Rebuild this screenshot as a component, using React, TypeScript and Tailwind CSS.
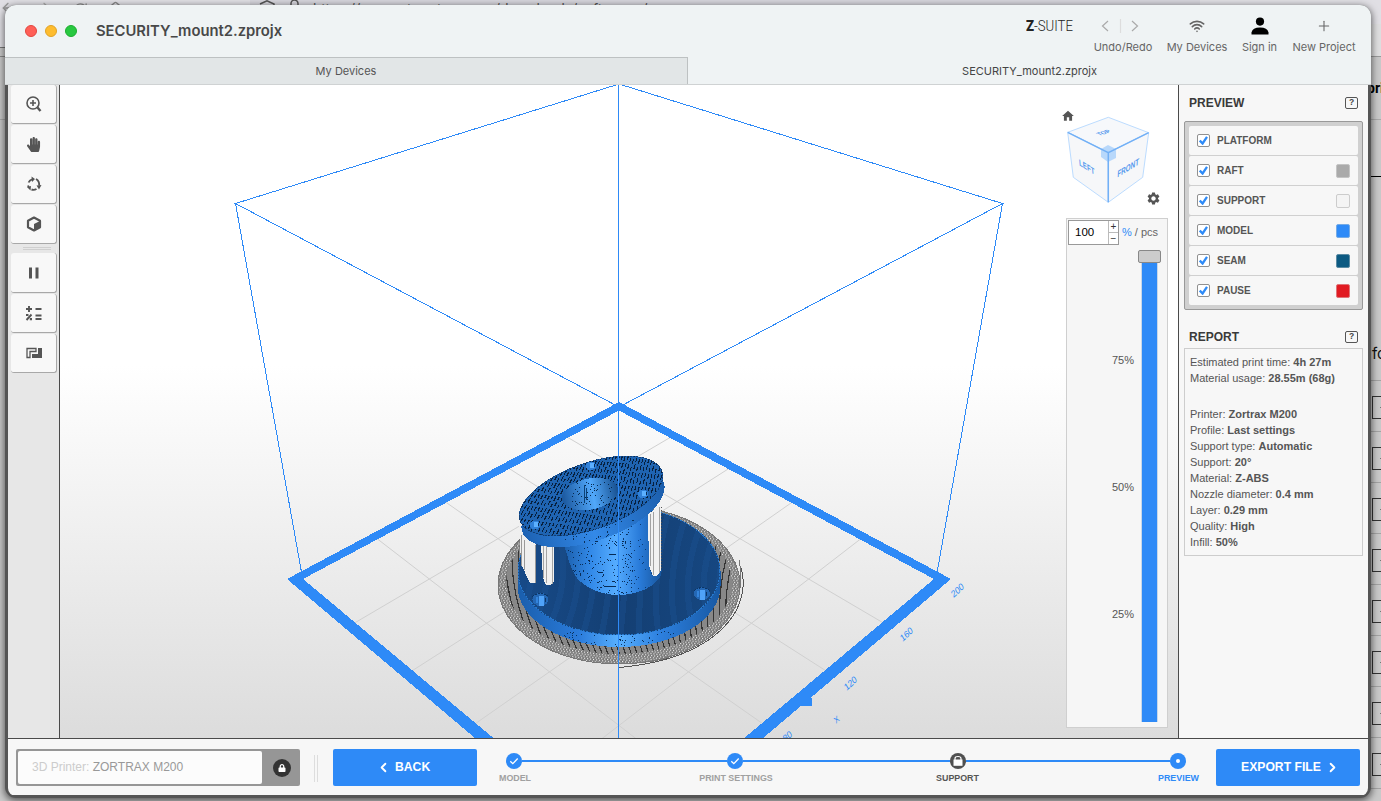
import React from "react";
import { Wifi, Plus, ChevronLeft, ChevronRight, ArrowLeft, ArrowRight, RotateCw, Home } from "lucide-react";
import { FaHandPaper, FaLock } from "react-icons/fa";
import { MdHome, MdSettings } from "react-icons/md";

const BLUE = "#2e8af7";

/* ---------- deterministic noise ---------- */
function makeRandom(seed: number) {
  let s = seed;
  return () => {
    s = (s * 16807) % 2147483647;
    return s / 2147483647;
  };
}

function speckles(seed: number, count: number, cx: number, cy: number, rx: number, ry: number) {
  const r = makeRandom(seed);
  let d = "";
  for (let i = 0; i < count; i++) {
    const x = Math.round(cx + (r() * 2 - 1) * rx);
    const y = Math.round(cy + (r() * 2 - 1) * ry);
    d += `M${x} ${y}h1v1h-1z`;
  }
  return d;
}

/* ---------- platform floor in perspective ---------- */
function floorPoint(u: number, v: number): string {
  const w = 1 - 0.1845 * (u + v);
  const x = 619 + (257.7 * (u - v)) / w;
  const y = (407 + 65.2 * (u + v)) / w;
  return `${x.toFixed(1)} ${y.toFixed(1)}`;
}

const floorGrid = [0.2, 0.4, 0.6, 0.8]
  .map((t) => `M${floorPoint(t, 0)}L${floorPoint(t, 1)}M${floorPoint(0, t)}L${floorPoint(1, t)}`)
  .join("");

/* filament lines on the flange: steep on the right, leaning on the left */
const topHatch = Array.from({ length: 46 }, (_, i) => {
  const x = 500 + i * 4;
  const lean = Math.max(8, 52 - i * 1.1);
  return {
    d: `M${x + lean} 450Q${x + lean * 0.45} 490 ${x - 8} 545`,
    offset: (i * 5.3) % 11,
  };
});

const raftHatch = Array.from({ length: 44 }, (_, i) => {
  const x = 470 + i * 6.4;
  const k = (x - 619) / 130;
  return `M${x + 10 + k * 12} 520Q${x - 14} 600 ${x + 22 - k * 16} 672`;
}).join("");

const baseBands = Array.from({ length: 15 }, (_, i) => {
  const x = 500 + i * 17;
  const bend = (619 - x) * 0.5;
  return `M${x - bend * 0.3 + 12} 505Q${x + bend * 0.7 + 6} 590 ${x - bend * 0.5} 650`;
}).join("");

function Model() {
  return (
    <g shapeRendering="crispEdges">
      {/* raft */}
      <path d="M741 568Q748 592 733 616Q702 660 619 667.500" fill="none" stroke="#555" strokeWidth="1" />
      <path d="M739 560Q746 590 728 618Q700 652 650 662" fill="none" stroke="#777" strokeWidth="1" />
      <ellipse cx="619" cy="585" rx="121" ry="79" fill="url(#raftDots)" stroke="#777" />
      <ellipse cx="619" cy="583" rx="113" ry="71" fill="#888" />
      <g clipPath="url(#raftClip)">
        <path d={raftHatch} fill="none" stroke="#333" strokeWidth="1.200" />
      </g>
      {/* base plate */}
      <path d="M517.500 571V586A101.500 61 0 0 0 720.500 586V571Z" fill="url(#rim)" />
      <path d={speckles(17, 70, 619, 639, 55, 8)} fill="#08325f" clipPath="url(#rimClip)" />
      <ellipse cx="619" cy="571" rx="101.500" ry="64.500" fill="url(#plate)" />
      <g clipPath="url(#plateClip)">
        <path d={baseBands} fill="none" stroke="#1b5394" strokeWidth="6" opacity=".4" />
      </g>
      <ellipse cx="619" cy="571" rx="101" ry="64" fill="none" stroke="#2677cb" strokeDasharray="2 1" />
      {[
        [540.5, 599.5],
        [702, 593.7],
      ].map(([x, y]) => (
        <g key={x}>
          <ellipse cx={x} cy={y} rx="8" ry="6.500" fill="#2467b4" />
          <path d={`M${x - 8} ${y - 3}q8 -6 16 0`} stroke="#0b3566" fill="none" strokeDasharray="2 1" />
          <rect x={x - 2} y={y - 4} width="5" height="10" fill="#4fa2f8" />
          <rect x={x - 5} y={y - 3} width="2" height="6" fill="#3384dc" />
          <rect x={x + 4} y={y - 2} width="1" height="4" fill="#0b3566" />
        </g>
      ))}
      {/* supports behind the flange */}
      <path d="M519 520H536V583H530L521 564Z" fill="#efefef" />
      <path d="M521 535V566M524 540V570M535 545V583" stroke="#999" />
      <path d="M541 545H554V581L551 585H546L543 578Z" fill="#f0f0f0" />
      <path d="M543 546V578M546 546V583M552 546V584" stroke="#a4a4a4" />
      {/* tube */}
      <path
        d="M560 535C568 553 570 574 581 582Q597 595 619 595Q645 594 658 580Q663 574 661 567C656 551 648 535 647 505L600 515Z"
        fill="url(#tube)"
      />
      <path d={speckles(41, 230, 600, 558, 32, 36)} fill="#072c58" clipPath="url(#tubeClip)" />
      <path d={speckles(93, 50, 632, 560, 20, 36)} fill="#0b3c75" clipPath="url(#tubeClip)" />
      <path d="M587 541h11M604 586h12M609 554h7M598 572h5" stroke="#052a55" />
      <path d="M648 514L661 505V570L657 576H653L649 566Z" fill="#f1f1f1" />
      <path d="M650 514V566M653 512V575M659 507V573" stroke="#a2a2a2" />
      <path d="M661 507V570" stroke="#555" strokeDasharray="1 2" />
      {/* flange */}
      <g transform="translate(2 11) rotate(-19.400 591 496)">
        <ellipse cx="591" cy="496" rx="75" ry="33.500" fill="url(#flangeRim)" />
      </g>
      <path d={speckles(71, 70, 595, 530, 40, 12)} fill="#08305c" clipPath="url(#flangeRimClip)" />
      <g transform="rotate(-19.400 591 496)">
        <ellipse cx="591" cy="496" rx="75.500" ry="33.500" fill="#1f64b2" />
        <ellipse cx="591" cy="496" rx="75" ry="33" fill="none" stroke="#123f75" strokeDasharray="2 1" />
      </g>
      <g clipPath="url(#flangeClip)" fill="none" stroke="#07203e" strokeWidth="1.100">
        {topHatch.map((h) => (
          <path key={h.d} d={h.d} strokeDasharray="4 2 5 3" strokeDashoffset={h.offset} />
        ))}
      </g>
      <g transform="rotate(-11 590 494)">
        <ellipse cx="590" cy="494" rx="28.500" ry="15.500" fill="url(#bore)" />
      </g>
      <path d={speckles(29, 60, 592, 493, 20, 12)} fill="#06294f" />
      <path d="M584 485V503M586 488V500" stroke="#0c4276" />
      {[
        [591, 466],
        [643, 494],
        [535, 525],
      ].map(([x, y]) => (
        <g key={x}>
          <ellipse cx={x} cy={y} rx="5.500" ry="4" fill="#2f80d8" />
          <rect x={x - 1} y={y - 3} width="4" height="5" fill="#5cb0ff" />
          <rect x={x + 3} y={y - 2} width="1" height="3" fill="#082d58" />
        </g>
      ))}
    </g>
  );
}

function Scene() {
  return (
    <svg className="block h-full w-full" viewBox="60 85 1118 653" preserveAspectRatio="none">
      <defs>
        <linearGradient id="sky" x1="0" y1="0" x2="0" y2="1">
          <stop offset="0" stopColor="#fff" />
          <stop offset=".43" stopColor="#fff" />
          <stop offset="1" stopColor="#dcdcdc" />
        </linearGradient>
        <pattern id="raftDots" width="3" height="4" patternUnits="userSpaceOnUse" patternTransform="rotate(8)">
          <rect width="3" height="4" fill="#868686" />
          <rect width="1" height="1" x="0" y="0" fill="#f4f4f4" />
          <rect width="1" height="1" x="1" y="2" fill="#f0f0f0" />
          <rect width="1" height="1" x="2" y="0" fill="#666" />
          <rect width="1" height="1" x="0" y="2" fill="#707070" />
        </pattern>
        <linearGradient id="rim">
          <stop offset="0" stopColor="#1a5eac" />
          <stop offset=".3" stopColor="#2a7bdb" />
          <stop offset=".5" stopColor="#58b0ff" />
          <stop offset=".7" stopColor="#2d80df" />
          <stop offset="1" stopColor="#1758a3" />
        </linearGradient>
        <linearGradient id="plate">
          <stop offset="0" stopColor="#174a88" />
          <stop offset=".5" stopColor="#143f73" />
          <stop offset="1" stopColor="#164781" />
        </linearGradient>
        <linearGradient id="tube">
          <stop offset="0" stopColor="#1858a2" />
          <stop offset=".3" stopColor="#3289e8" />
          <stop offset=".55" stopColor="#55acff" />
          <stop offset=".78" stopColor="#2a7cda" />
          <stop offset="1" stopColor="#17559d" />
        </linearGradient>
        <linearGradient id="flangeRim">
          <stop offset="0" stopColor="#1d62b3" />
          <stop offset=".45" stopColor="#3389e8" />
          <stop offset="1" stopColor="#1b5dab" />
        </linearGradient>
        <linearGradient id="bore">
          <stop offset="0" stopColor="#1a569c" />
          <stop offset=".55" stopColor="#51a8fb" />
          <stop offset="1" stopColor="#174f8e" />
        </linearGradient>
        <clipPath id="raftClip">
          <ellipse cx="619" cy="583" rx="113" ry="71" />
        </clipPath>
        <clipPath id="rimClip">
          <ellipse cx="619" cy="586" rx="101" ry="61" />
        </clipPath>
        <clipPath id="plateClip">
          <ellipse cx="619" cy="571" rx="101" ry="64" />
        </clipPath>
        <clipPath id="tubeClip">
          <path d="M560 535C568 553 570 574 581 582Q597 595 619 595Q645 594 658 580Q663 574 661 567C656 551 648 535 647 505L600 515Z" />
        </clipPath>
        <clipPath id="flangeRimClip">
          <ellipse cx="593" cy="507" rx="75" ry="33" transform="rotate(-19.400 593 507)" />
        </clipPath>
        <clipPath id="flangeClip">
          <ellipse cx="591" cy="496" rx="75" ry="33" transform="rotate(-19.400 591 496)" />
        </clipPath>
      </defs>
      <rect x="60" y="85" width="1118" height="653" fill="url(#sky)" />
      <path d={floorGrid} fill="none" stroke="#d0d0d0" strokeWidth="1" />
      <g shapeRendering="crispEdges">
        <path
          d="M619 402L951 579L619 860L287 579ZM619 410.500L303 579L619 843L934 579Z"
          fill={BLUE}
          fillRule="evenodd"
        />
        <path d="M795 706H812V698L804 694Z" fill={BLUE} />
        <path
          d="M619 84L235.500 203.500L619 407L1002.500 203.500ZM235.500 203.500L302 575M1002.500 203.500L937 573"
          fill="none"
          stroke={BLUE}
          strokeWidth="1"
        />
      </g>
      <Model />
      <path d="M618.500 85V738" stroke={BLUE} strokeWidth="1" />
      <g fill={BLUE} fontFamily="Liberation Sans, sans-serif" fontSize="9" textAnchor="middle">
        <text transform="translate(959 593) rotate(-42) skewX(-12)">200</text>
        <text transform="translate(908 637) rotate(-42) skewX(-12)">160</text>
        <text transform="translate(852 686) rotate(-42) skewX(-12)">120</text>
        <text transform="translate(789 739) rotate(-42) skewX(-12)">80</text>
        <text transform="translate(838 722) rotate(-42) skewX(-12)" fontSize="8">X</text>
      </g>
    </svg>
  );
}

function ViewCube() {
  return (
    <svg className="block h-[100px] w-[110px]" viewBox="1058 108 110 100">
      <path d="M1108.300 117.300L1067.700 132.300L1108.300 152.700L1148.700 132.700Z" fill="#f6f8fb" stroke="#bcdcff" />
      <path d="M1067.700 132.300L1073.300 177.300L1108.300 202.300L1108.300 152.700Z" fill="#f6f7f9" stroke="#bcdcff" />
      <path d="M1148.700 132.700L1142.700 177.300L1108.300 202.300L1108.300 152.700Z" fill="#f6f7f9" stroke="#bcdcff" />
      <path d="M1101 149L1108 145L1116 149V158L1108 162L1101 157Z" fill="#b8d8fb" />
      <path
        d="M1067.700 132.300L1108.300 152.700L1148.700 132.700M1108.300 152.700V202.300"
        fill="none"
        stroke="#72b0f6"
        strokeWidth="1.500"
      />
      <g fill="#5599ee" fontFamily="Liberation Sans, sans-serif" fontWeight="700" textAnchor="middle">
        <text transform="matrix(.72 .45 .08 1.050 1087 170)" fontSize="8.500">LEFT</text>
        <text transform="matrix(.7 -.42 -.06 1.050 1128 171)" fontSize="9">FRONT</text>
        <text transform="matrix(.8 -.24 .75 .5 1105.500 134)" fontSize="7.500">TOP</text>
      </g>
    </svg>
  );
}

function ToolButton({ children, height }: { children: React.ReactNode; height: string }) {
  return (
    <button
      className={`flex w-[46px] items-center justify-center rounded-[3px] border-r border-b border-[#a8a8a8] bg-[#f8f8f8] text-[#555] ${height}`}
    >
      {children}
    </button>
  );
}

function Toolbar() {
  return (
    <aside className="flex w-[52px] shrink-0 flex-col border-r border-[#4a4a4a] bg-[#e7e7e7] pl-[3px]">
      <ToolButton height="h-[39px]">
        <svg className="size-4" viewBox="0 0 16 16" fill="none" stroke="currentColor">
          <circle cx="7" cy="7" r="6" strokeWidth="1.600" />
          <path d="M7 4V10M4 7H10" strokeWidth="1.600" />
          <path d="M11.500 11.500L14.500 15" strokeWidth="2.400" />
        </svg>
      </ToolButton>
      <div className="h-px" />
      <ToolButton height="h-[39px]">
        <FaHandPaper size={15} />
      </ToolButton>
      <div className="h-px" />
      <ToolButton height="h-[39px]">
        <svg className="size-4" viewBox="0 0 16 16" fill="none" stroke="currentColor" strokeWidth="1.900">
          <path d="M2.600 6.500A5.300 5.300 0 0 1 6 3.300M10 3Q13.500 5 13.200 9.500M5.500 13.500Q8 14.500 10.500 13M2.800 11.500L2 9.500" />
          <path d="M5.500 .5L9 3L6 6ZM10.500 9.500L15.500 9L13 13.500ZM1 11L5 10L4.500 14.500Z" fill="currentColor" stroke="none" />
        </svg>
      </ToolButton>
      <div className="h-px" />
      <ToolButton height="h-[39px]">
        <svg className="size-4" viewBox="0 0 16 16" fill="none" stroke="currentColor">
          <path d="M8 1.500L14 4.800V11.200L8 14.500L2 11.200V4.800Z" strokeWidth="2.200" strokeLinejoin="round" />
          <path d="M14 5L8 8V15L14 11.500Z" fill="currentColor" stroke="none" />
        </svg>
      </ToolButton>
      <div className="mt-[3px] ml-[12px] h-[3px] w-7 border-y border-[#cfcfcf]" />
      <ToolButton height="h-[40px] mt-[3px]">
        <svg className="h-3 w-[11px]" viewBox="0 0 11 12" fill="currentColor">
          <path d="M1 .5H4V11.500H1ZM7.500 .5H10.500V11.500H7.500Z" />
        </svg>
      </ToolButton>
      <div className="h-px" />
      <ToolButton height="h-[39px]">
        <svg className="h-4 w-[18px]" viewBox="0 0 18 16" fill="none" stroke="currentColor" strokeWidth="1.900">
          <path d="M4 1V7M1 4H7M10.500 4H16.500M10.500 10.500H16.500M10.500 14H16.500M1.500 15L6.500 9.500" />
          <path d="M1 10H3.500M4.800 14.200H7" strokeWidth="2.200" />
        </svg>
      </ToolButton>
      <div className="h-px" />
      <ToolButton height="h-[39px]">
        <svg className="h-3 w-4" viewBox="0 0 16 12">
          <path d="M1 1.500H10V4.500H4V10.500H1Z" fill="none" stroke="currentColor" strokeWidth="1.300" />
          <path d="M12 1H16V11H6V7H12Z" fill="currentColor" />
        </svg>
      </ToolButton>
    </aside>
  );
}

function LayerSlider() {
  return (
    <div className="relative flex h-full flex-col border border-[#cfcfcf] bg-[#f6f6f6]">
      <div className="flex items-center pt-px pl-px">
        <div className="flex h-[25px] w-[51px] border border-[#999] bg-white">
          <span className="w-[39px] pl-[6px] text-[11.500px] leading-[23px] text-black">100</span>
          <div className="flex flex-1 flex-col border-l border-[#bbb] text-center text-[10px] leading-[11px] text-[#333]">
            <span className="border-b border-[#bbb]">+</span>
            <span>−</span>
          </div>
        </div>
        <span className="ml-[3px] text-[11px] whitespace-nowrap text-[#666]">
          <span className="text-[#2e8af7]">%</span> / pcs
        </span>
      </div>
      <div className="flex flex-1 pl-[45px]">
        <div className="flex w-[22px] flex-col pt-[108px] text-right text-[11px] leading-[14px] text-[#555]">
          <span>75%</span>
          <span className="mt-[113px]">50%</span>
          <span className="mt-[113px]">25%</span>
        </div>
        <div className="ml-[3px] flex w-6 flex-col items-center pt-[5px] pb-[5px]">
          <div className="h-[13px] w-[23px] rounded-[2px] border border-[#888] bg-[#ccc]" />
          <div className="w-[17px] flex-1 border-x border-[#c8d7e8] bg-[#2e8af7]" />
        </div>
      </div>
    </div>
  );
}

function HelpBox() {
  return (
    <span className="flex h-3 w-[13px] items-center justify-center rounded-[2px] border border-[#555] text-[8.500px] leading-none font-bold text-[#444]">
      ?
    </span>
  );
}

const layers: [string, string | null][] = [
  ["PLATFORM", null],
  ["RAFT", "bg-[#aaaaaa] border-[#c4c4c4]"],
  ["SUPPORT", "bg-[#f4f4f4] border-[#cccccc]"],
  ["MODEL", "bg-[#2e8af7] border-[#75abe6]"],
  ["SEAM", "bg-[#0c5a82] border-[#5b8ba3]"],
  ["PAUSE", "bg-[#e11b22] border-[#df7478]"],
];

const report = [
  ["Printer:", "Zortrax M200"],
  ["Profile:", "Last settings"],
  ["Support type:", "Automatic"],
  ["Support:", "20°"],
  ["Material:", "Z-ABS"],
  ["Nozzle diameter:", "0.4 mm"],
  ["Layer:", "0.29 mm"],
  ["Quality:", "High"],
  ["Infill:", "50%"],
];

function SidePanel() {
  return (
    <aside className="w-[190px] shrink-0 border-l border-[#4a4a4a] bg-[#f7f7f7] pr-[5px] pl-[5px]">
      <div className="flex h-[36px] items-center justify-between pr-[5px] pb-px pl-[5px]">
        <h2 className="text-[12px] font-bold text-[#3a3a3a]">PREVIEW</h2>
        <HelpBox />
      </div>
      <div className="flex h-[189px] flex-col gap-px rounded-[2px] border border-[#999] bg-[#d0d0d0] p-[4px]">
        {layers.map(([name, swatch]) => (
          <div key={name} className="flex h-[29px] items-center rounded-[2px] bg-[#f7f7f7] pr-[8px] pl-[8px]">
            <span className="flex size-[13px] items-center justify-center rounded-[2px] border border-[#909090] bg-white">
              <svg className="size-[9px]" viewBox="0 0 9 9">
                <path d="M.8 4.600L3.600 7.500L8 .9" fill="none" stroke={BLUE} strokeWidth="2.300" />
              </svg>
            </span>
            <span className="ml-[7px] flex-1 text-[10px] font-bold text-[#555]">{name}</span>
            {swatch && <span className={`size-[14px] rounded-[2px] border ${swatch}`} />}
          </div>
        ))}
      </div>
      <div className="mt-[15px] flex h-[23px] items-center justify-between pr-[5px] pl-[5px]">
        <h2 className="text-[12px] font-bold text-[#3a3a3a]">REPORT</h2>
        <HelpBox />
      </div>
      <div className="h-[208px] border border-[#cdcdcd] pt-[5px] pl-[5px] text-[11px] leading-4 whitespace-nowrap text-[#555]">
        <p>
          Estimated print time: <b>4h 27m</b>
        </p>
        <p className="mb-5">
          Material usage: <b>28.55m (68g)</b>
        </p>
        {report.map(([k, v]) => (
          <p key={k}>
            {k} <b>{v}</b>
          </p>
        ))}
      </div>
    </aside>
  );
}

function HeaderAction({ icon, label, width }: { icon: React.ReactNode; label: string; width: string }) {
  return (
    <div className={`flex flex-col items-center ${width}`}>
      <div className="flex h-[22px] items-center justify-center">{icon}</div>
      <span className="mt-[3px] text-[11px] leading-[14px] whitespace-nowrap text-[#666]">{label}</span>
    </div>
  );
}

function TitleBar() {
  return (
    <header className="flex h-[52px] shrink-0 bg-[#eff3f4] font-[Inter,sans-serif]">
      <div className="flex items-center gap-2 pl-5">
        <span className="size-3 rounded-full border border-[#e2463f] bg-[#ff5f57]" />
        <span className="size-3 rounded-full border border-[#e1a325] bg-[#febc2e]" />
        <span className="size-3 rounded-full border border-[#1dad2f] bg-[#28c840]" />
      </div>
      <h1 className="ml-[19px] flex-1 text-[14.800px] leading-[52px] font-semibold text-[#484848]">
        SECURITY_mount2.zprojx
      </h1>
      <div className="flex pt-[10px] pr-[15px]">
        <svg className="mr-[20px] h-[22px] w-[48px]" viewBox="0 0 48 22">
          <text
            x="0"
            y="16"
            fontFamily="Roboto, sans-serif"
            fontSize="14"
            fill="#222"
            textLength="47"
            lengthAdjust="spacingAndGlyphs"
          >
            <tspan fontWeight="900">Z</tspan>
            <tspan fontWeight="300">-SUITE</tspan>
          </text>
        </svg>
        <HeaderAction
          width="w-[58px] mr-[15px]"
          label="Undo/Redo"
          icon={
            <svg className="relative -left-[3px] h-4 w-10" viewBox="0 0 40 16" fill="none" stroke="#aaa" strokeWidth="1.200">
              <path d="M8 3L2.500 8L8 13M32 3L37.500 8L32 13" />
              <path d="M20.500 1V15" stroke="#ddd" />
            </svg>
          }
        />
        <HeaderAction
          width="w-[60px] mr-[15px]"
          label="My Devices"
          icon={<Wifi size={16} strokeWidth={2.400} className="text-[#666]" />}
        />
        <HeaderAction
          width="w-[35px] mr-[15px]"
          label="Sign in"
          icon={
            <svg className="h-[18px] w-[18px]" viewBox="0 0 18 18" fill="#000">
              <circle cx="9" cy="4.600" r="4.100" />
              <path d="M.5 17.500V15.500Q1.500 10.500 9 10.500Q16.500 10.500 17.500 15.500V17.500Z" />
            </svg>
          }
        />
        <HeaderAction
          width="w-[64px]"
          label="New Project"
          icon={<Plus size={16} strokeWidth={1.600} className="text-[#666]" />}
        />
      </div>
    </header>
  );
}

const steps = [
  { label: "MODEL", kind: "done", color: "text-[#a0a0a0] ml-[2px]", pos: "w-[221px]" },
  { label: "PRINT SETTINGS", kind: "done", color: "text-[#a0a0a0] ml-[2px]", pos: "w-[223px]" },
  { label: "SUPPORT", kind: "lock", color: "text-[#555] mr-px", pos: "w-[220px]" },
  { label: "PREVIEW", kind: "now", color: "text-[#2e8af7] ml-px", pos: "w-[16px]" },
];

function StepDot({ kind }: { kind: string }) {
  if (kind === "lock")
    return (
      <svg className="size-4 shrink-0" viewBox="0 0 16 16">
        <circle cx="8" cy="8" r="8" fill="#505050" />
        <path d="M3.500 6.500H12.500V12.800H3.500Z" fill="#fff" />
        <path d="M5 7V5.500Q5 3.500 8 3.500Q11 3.500 11 5.500V7" stroke="#fff" strokeWidth="1.200" fill="none" />
      </svg>
    );
  if (kind === "now")
    return (
      <svg className="size-4 shrink-0" viewBox="0 0 16 16">
        <circle cx="8" cy="8" r="8" fill={BLUE} />
        <circle cx="8" cy="8" r="2" fill="#fff" />
      </svg>
    );
  return (
    <svg className="size-4 shrink-0" viewBox="0 0 16 16">
      <circle cx="8" cy="8" r="8" fill={BLUE} />
      <path d="M4.300 8.300L6.800 10.700L11.700 5.500" stroke="#fff" strokeWidth="1.300" fill="none" />
    </svg>
  );
}

function Footer() {
  return (
    <footer className="flex h-[57px] shrink-0 border-t border-[#4a4a4a] bg-[#f7f7f7] pt-[10px] pl-[8px]">
      <div className="flex h-[37px] w-[284px] items-center rounded-[2px] bg-[#969696] p-[2px]">
        <div className="h-full w-[244px] rounded-[2px] bg-[#fcfcfc] pl-[14px] text-[12px] leading-[33px] text-[#999]">
          <span className="text-[#ccc]">3D Printer:</span> ZORTRAX M200
        </div>
        <span className="ml-[11px] flex size-[18px] items-center justify-center rounded-full bg-[#333] text-white">
          <FaLock size={8} />
        </span>
      </div>
      <div className="mt-[6px] ml-[14px] h-[27px] w-[4px] border-x border-[#ddd]" />
      <button className="ml-[15px] flex h-[37px] w-[144px] items-center rounded-[2px] bg-[#2e8af7] pb-px pl-[43px] text-[12.200px] font-bold text-white">
        <ChevronLeft size={15} strokeWidth={3} className="mr-[4px]" />
        BACK
      </button>
      <div className="mt-[4px] ml-[29px] flex h-9 w-[680px]">
        {steps.map((s) => (
          <div key={s.label} className={`flex shrink-0 flex-col ${s.pos}`}>
            <div className="flex items-center">
              <StepDot kind={s.kind} />
              {s.kind !== "now" && <div className="h-[2px] flex-1 bg-[#2e8af7]" />}
            </div>
            <div className="mt-[3px] flex w-4 justify-center">
              <span className={`text-[8.900px] leading-3 font-bold whitespace-nowrap ${s.color}`}>{s.label}</span>
            </div>
          </div>
        ))}
      </div>
      <button className="ml-[30px] flex h-[37px] w-[144px] shrink-0 items-center rounded-[2px] bg-[#2e8af7] pb-px pl-[25px] text-[12.200px] font-bold text-white">
        EXPORT FILE
        <ChevronRight size={15} strokeWidth={3} className="ml-[4px]" />
      </button>
    </footer>
  );
}

function Desktop() {
  return (
    <div className="absolute inset-0 overflow-hidden bg-[#c9c9c9]">
      <div className="absolute inset-x-0 top-0 h-12 bg-[#e0dfe4]" />
      <div className="absolute top-0 left-[250px] h-12 w-[950px] bg-[#d6d5dc]" />
      <ArrowLeft size={16} className="absolute top-0 left-0 text-[#999]" />
      <ArrowRight size={16} className="absolute top-0 left-9 text-[#aaa]" />
      <RotateCw size={15} className="absolute top-[2px] left-[73px] text-[#888]" />
      <Home size={17} className="absolute top-[1px] left-[107px] text-[#888]" />
      <svg className="absolute top-0 left-[255px] h-5 w-12" viewBox="0 0 48 20" fill="none" stroke="#555" strokeWidth="1.500">
        <path d="M5 4L12 .8L19 4V10M36 8V3.500A3.500 3.500 0 0 1 43 3.500V8" />
      </svg>
      <span className="absolute top-px left-[313px] font-[Inter,sans-serif] text-[14px] leading-4 text-[#555]">
        https://support.zortrax.com/downloads/softwares/
      </span>
      <div className="absolute top-[24px] right-0 h-8 w-4 bg-[#dededf]" />
      <div className="absolute top-[56px] right-0 h-px w-4 bg-[#999]" />
      <div className="absolute top-[119px] right-0 h-px w-4 bg-[#aaa]" />
      <div className="absolute top-[176px] right-0 h-px w-4 bg-black" />
      <div className="absolute top-[47px] left-0 h-px w-2 bg-[#777]" />
      <div className="absolute top-[56px] left-0 h-px w-2 bg-[#888]" />
      <div className="absolute top-[119px] left-0 h-px w-2 bg-[#aaa]" />
      <span className="absolute top-[80px] left-[1367px] font-[Roboto,sans-serif] text-[14px] leading-4 font-bold text-black">
        pri
      </span>
      <span className="absolute top-[345px] left-[1372px] font-[Inter,sans-serif] text-[15px] leading-[18px] text-[#111]">
        fo
      </span>
      <div className="absolute top-[380px] left-[1370px] flex w-8 flex-col">
        {[0, 1, 2, 3, 4, 5, 6, 7].map((i) => (
          <div key={i} className="h-[51px] border-t border-[#a4a4a4] pt-[15px] pl-[2px]">
            <div className="flex h-[23px] items-center border border-[#333] pl-[7px]">
              <div className="h-px w-3 bg-[#777]" />
            </div>
          </div>
        ))}
        <div className="border-t border-[#a4a4a4]" />
      </div>
    </div>
  );
}

export default function App() {
  return (
    <div className="relative h-[801px] w-[1381px] overflow-hidden pt-[5px] pl-[5px] font-['Liberation_Sans',Arial,sans-serif]">
      <Desktop />
      <main className="relative flex h-[793px] w-[1366px] flex-col overflow-hidden rounded-[11px] bg-[#555] shadow-[0_2px_7px_1px_rgba(0,0,0,0.550)]">
        <TitleBar />
        <nav className="flex h-[28px] shrink-0 border-b border-[#cfd2d3] bg-[#eff3f4] text-center font-[Inter,sans-serif] text-[11px] leading-[27px]">
          <div className="w-[683px] border-t border-r border-[#bdc1c2] bg-[#e2e6e7] text-[#555]">My Devices</div>
          <div className="flex-1 pt-px text-[#444]">SECURITY_mount2.zprojx</div>
        </nav>
        <div className="mx-[3px] mb-[2px] flex min-h-0 flex-1 flex-col overflow-hidden rounded-b-[8px]">
          <div className="flex h-[653px] shrink-0">
            <Toolbar />
            <section className="relative min-w-0 flex-1">
              <Scene />
              <div className="absolute top-[23px] right-[10px]">
                <ViewCube />
              </div>
              <MdHome size={14} className="absolute top-[24px] right-[103px] text-[#555]" />
              <MdSettings size={15} className="absolute top-[106px] right-[17px] text-[#555]" />
              <div className="absolute top-[133px] right-[10px] h-[510px] w-[102px]">
                <LayerSlider />
              </div>
            </section>
            <SidePanel />
          </div>
          <Footer />
        </div>
      </main>
    </div>
  );
}
